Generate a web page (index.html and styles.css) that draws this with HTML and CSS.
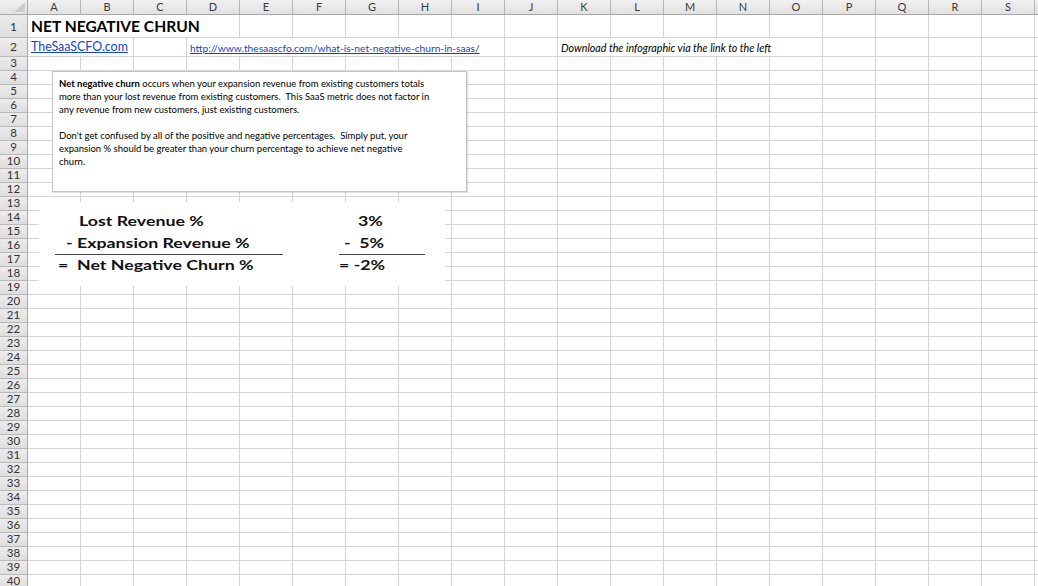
FILE: index.html
```html
<!DOCTYPE html>
<html>
<head>
<meta charset="utf-8">
<title>Net Negative Churn</title>
<link rel="stylesheet" href="styles.css">
</head>
<body>
<div class="sheet">
  <div class="colheads">
    <div class="corner">
      <svg class="corner-tri" width="12" height="11" viewBox="0 0 12 11"><polygon points="11,0 11,10 0,10" fill="#cdcdcd"/></svg>
    </div>
    <div class="ch">A</div><div class="ch">B</div><div class="ch">C</div><div class="ch">D</div><div class="ch">E</div>
    <div class="ch">F</div><div class="ch">G</div><div class="ch">H</div><div class="ch">I</div><div class="ch">J</div>
    <div class="ch">K</div><div class="ch">L</div><div class="ch">M</div><div class="ch">N</div><div class="ch">O</div>
    <div class="ch">P</div><div class="ch">Q</div><div class="ch">R</div><div class="ch">S</div><div class="ch"></div>
  </div>
  <div class="main">
    <div class="rowheads">
      <div class="rh rh1">1</div><div class="rh rh2">2</div>
      <div class="rh">3</div><div class="rh">4</div><div class="rh">5</div><div class="rh">6</div><div class="rh">7</div>
      <div class="rh">8</div><div class="rh">9</div><div class="rh">10</div><div class="rh">11</div><div class="rh">12</div>
      <div class="rh">13</div><div class="rh">14</div><div class="rh">15</div><div class="rh">16</div><div class="rh">17</div>
      <div class="rh">18</div><div class="rh">19</div><div class="rh">20</div><div class="rh">21</div><div class="rh">22</div>
      <div class="rh">23</div><div class="rh">24</div><div class="rh">25</div><div class="rh">26</div><div class="rh">27</div>
      <div class="rh">28</div><div class="rh">29</div><div class="rh">30</div><div class="rh">31</div><div class="rh">32</div>
      <div class="rh">33</div><div class="rh">34</div><div class="rh">35</div><div class="rh">36</div><div class="rh">37</div>
      <div class="rh">38</div><div class="rh">39</div><div class="rh rh40">40</div>
    </div>
    <div class="cells">
      <div class="row row1">
        <div class="cell span-a-d title">NET NEGATIVE CHRUN</div>
      </div>
      <div class="row row2">
        <div class="cell span-a-b"><a class="link site" href="#">TheSaaSCFO.com</a></div>
        <div class="cell span-d-i"><a class="link url" href="#">http://www.thesaascfo.com/what-is-net-negative-churn-in-saas/</a></div>
        <div class="cell span-k-o note">Download the infographic via the link to the left</div>
      </div>
      <div class="rest"></div>

      <div class="textbox">
        <span class="ln"><b>Net negative churn</b> occurs when your expansion revenue from existing customers totals</span>
        <span class="ln">more than your lost revenue from existing customers.  This SaaS metric does not factor in</span>
        <span class="ln">any revenue from new customers, just existing customers.</span>
        <span class="ln"> </span>
        <span class="ln">Don't get confused by all of the positive and negative percentages.  Simply put, your</span>
        <span class="ln">expansion % should be greater than your churn percentage to achieve net negative</span>
        <span class="ln">churn.</span>
      </div>

      <div class="chart">
        <div class="eq eq-left">
          <div class="eqln l1"><span class="wide">Lost Revenue %</span></div>
          <div class="eqln l2 rule"><span class="wide">- Expansion Revenue %</span></div>
          <div class="eqln l3"><span class="wide">=  Net Negative Churn %</span></div>
        </div>
        <div class="eq eq-right">
          <div class="eqln r1"><span class="wide">3%</span></div>
          <div class="eqln r2 rule"><span class="wide">-  5%</span></div>
          <div class="eqln r3"><span class="wide">= -2%</span></div>
        </div>
      </div>
    </div>
  </div>
</div>
</body>
</html>
```
FILE: styles.css
```css
html, body {
  margin: 0;
  padding: 0;
  background: #ffffff;
}
body {
  width: 1038px;
  height: 586px;
  overflow: hidden;
  font-family: Lato, "Open Sans", sans-serif;
  color: #000;
}
.sheet {
  width: 1038px;
  height: 586px;
  overflow: hidden;
}

/* column headers */
.colheads {
  display: flex;
  height: 15px;
  box-sizing: border-box;
  border-bottom: 1px solid #a9a9a9;
  background: linear-gradient(#f1f1f1, #e1e1e1);
  white-space: nowrap;
}
.corner {
  flex: 0 0 28px;
  box-sizing: border-box;
  border-right: 1px solid #a9a9a9;
  display: flex;
  justify-content: flex-end;
  align-items: flex-end;
  padding: 0 1px 1px 0;
}
.corner-tri { display: block; }
.ch {
  flex: 0 0 53px;
  box-sizing: border-box;
  border-right: 1px solid #b4b4b4;
  text-align: center;
  font-size: 11px;
  line-height: 14px;
  color: #3a3a3a;
}

/* body */
.main {
  display: flex;
  align-items: flex-start;
}
.rowheads {
  flex: 0 0 28px;
  display: flex;
  flex-direction: column;
}
.rh {
  height: 14px;
  box-sizing: border-box;
  border-right: 1px solid #a9a9a9;
  border-bottom: 1px solid #b9b9b9;
  background: linear-gradient(#ececec, #dedede);
  text-align: center;
  font-size: 11.5px;
  line-height: 12px;
  color: #333;
}
.rh1 { height: 23px; line-height: 23px; font-size: 12px; }
.rh2 { height: 19px; line-height: 18px; font-size: 12px; }
.rh40 { line-height: 11px; }

.cells {
  position: relative;
  flex: 0 0 1060px;
  background-image: repeating-linear-gradient(to right, transparent 0, transparent 52px, #d5d5d5 52px, #d5d5d5 53px);
}
.row {
  display: grid;
  grid-template-columns: repeat(20, 53px);
  box-sizing: border-box;
  border-bottom: 1px solid #d5d5d5;
}
.row1 { height: 23px; }
.row2 { height: 19px; }
.cell {
  background: #fff;
  box-sizing: border-box;
  border-right: 1px solid #d5d5d5;
  white-space: nowrap;
  padding-left: 3px;
}
.span-a-d { grid-column: 1 / span 4; }
.span-a-b { grid-column: 1 / span 2; }
.span-d-i { grid-column: 4 / span 6; }
.span-k-o { grid-column: 11 / span 5; }

.title {
  font-weight: 700;
  font-size: 15.6px;
  line-height: 22px;
}
.link {
  color: #1144cc;
  text-decoration: underline;
}
.site {
  font-size: 12.4px;
  line-height: 18px;
  display: block;
}
.url {
  font-size: 10.2px;
  line-height: 12px;
  display: block;
  padding-top: 4px;
}
.note {
  font-style: italic;
  font-size: 10.7px;
  line-height: 12px;
  padding-top: 4px;
}

.rest {
  height: 540px;
  background-image: repeating-linear-gradient(to bottom, transparent 0, transparent 13px, #d5d5d5 13px, #d5d5d5 14px);
}

/* text box overlay */
.textbox {
  position: absolute;
  left: 24px;
  top: 56px;
  width: 415px;
  height: 121px;
  box-sizing: border-box;
  background: #fff;
  border: 1px solid #c4c4c4;
  box-shadow: 1px 1px 1px rgba(0,0,0,0.12);
  padding: 5px 0 0 6px;
  font-size: 9.5px;
  line-height: 13px;
  color: #000;
}
.ln {
  display: block;
  white-space: pre;
  height: 13px;
}

/* equation picture overlay */
.chart {
  position: absolute;
  left: 11px;
  top: 187px;
  width: 406px;
  height: 84px;
  background: #fff;
  display: flex;
  padding-top: 8px;
  box-sizing: border-box;
}
.eq {
  display: flex;
  flex-direction: column;
}
.eq-left { margin-left: 16px; width: 228px; }
.eq-right { margin-left: 56px; width: 86px; }
.eqln {
  font-weight: 700;
  font-size: 14px;
  line-height: 22px;
  height: 22px;
  white-space: pre;
  color: #111;
}
.wide {
  display: inline-block;
  transform: scaleX(1.27);
  transform-origin: left center;
}
.rule {
  height: 22px;
  border-bottom: 1px solid #444;
}
.l1 { padding-left: 24px; }
.l2 { padding-left: 11px; }
.l3 { padding-left: 3px; margin-top: -1px; }
.r1 { padding-left: 19px; }
.r2 { padding-left: 5px; }
.r3 { padding-left: 0; margin-top: -1px; }
```
